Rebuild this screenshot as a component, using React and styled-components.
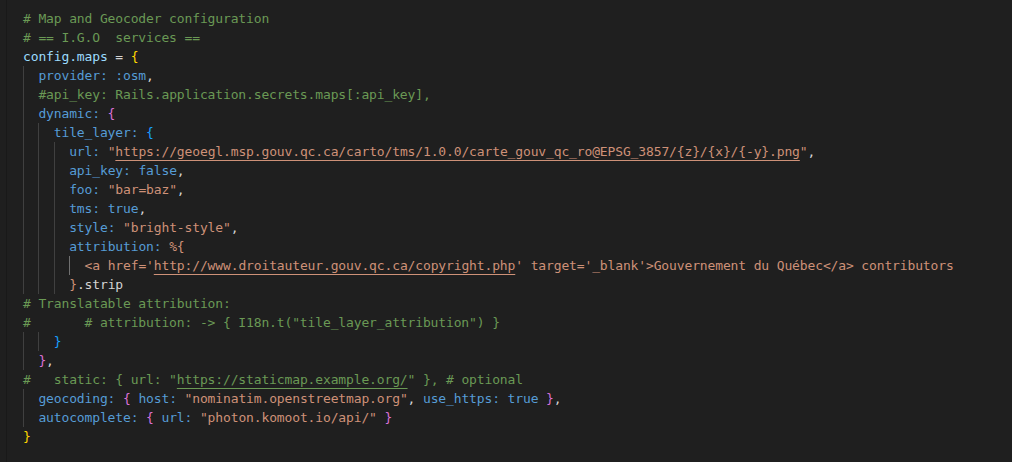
import React from "react";
import styled, { createGlobalStyle } from "styled-components";

const Global = createGlobalStyle`
  html, body { margin: 0; padding: 0; background: #1f1f1f; }
  #root { min-height: 100vh; }
`;

const COLORS = {
  c: "#6a9955",
  v: "#9cdcfe",
  k: "#569cd6",
  p: "#d4d4d4",
  s: "#ce9178",
  b1: "#ffd700",
  b2: "#da70d6",
  b3: "#179fff",
};

const Editor = styled.div`
  display: flex;
  width: 1012px;
  height: 462px;
  background: #1f1f1f;
  overflow: hidden;
`;

const Gutter = styled.div`
  flex: 0 0 6px;
  border-right: 1px solid #191919;
`;

const Code = styled.div`
  display: flex;
  flex-direction: column;
  padding: 9px 0 0 16px;
  font-family: "DejaVu Sans Mono", "Liberation Mono", monospace;
  font-size: 13px;
  letter-spacing: -0.136px;
  line-height: 19px;
  white-space: pre;
`;

const Line = styled.div`
  display: flex;
  height: 19px;
  align-items: flex-start;
`;

const Guide = styled.span`
  display: inline-block;
  height: 19px;
  box-shadow: inset 1px 0 0 ${(p) => (p.$active ? "#707070" : "#404040")};
`;

const Tok = styled.span`
  color: ${(p) => COLORS[p.$t]};
  text-decoration: ${(p) => (p.$u ? "underline" : "none")};
  text-decoration-thickness: 1px;
  text-underline-offset: 4px;
`;

const L = (g, tokens, active = -1) => ({ g, tokens, active });

const lines = [
  L(0, [["c", "# Map and Geocoder configuration"]]),
  L(0, [["c", "# == I.G.O  services =="]]),
  L(0, [["v", "config.maps"], ["p", " = "], ["b1", "{"]]),
  L(1, [["k", "provider: :osm"], ["p", ","]]),
  L(1, [["c", "#api_key: Rails.application.secrets.maps[:api_key],"]]),
  L(1, [["k", "dynamic: "], ["b2", "{"]]),
  L(2, [["k", "tile_layer: "], ["b3", "{"]]),
  L(3, [
    ["k", "url: "],
    ["s", '"'],
    ["s", "https://geoegl.msp.gouv.qc.ca/carto/tms/1.0.0/carte_gouv_qc_ro@EPSG_3857/{z}/{x}/{-y}.png", true],
    ["s", '"'],
    ["p", ","],
  ]),
  L(3, [["k", "api_key: false"], ["p", ","]]),
  L(3, [["k", "foo: "], ["s", '"bar=baz"'], ["p", ","]]),
  L(3, [["k", "tms: true"], ["p", ","]]),
  L(3, [["k", "style: "], ["s", '"bright-style"'], ["p", ","]]),
  L(3, [["k", "attribution: "], ["s", "%{"]]),
  L(
    4,
    [
      ["s", "<a href='"],
      ["s", "http://www.droitauteur.gouv.qc.ca/copyright.php", true],
      ["s", "' target='_blank'>Gouvernement du Québec</a> contributors"],
    ],
    3
  ),
  L(3, [["s", "}"], ["p", ".strip"]]),
  L(0, [["c", "# Translatable attribution:"]]),
  L(0, [["c", '#       # attribution: -> { I18n.t("tile_layer_attribution") }']]),
  L(2, [["b3", "}"]]),
  L(1, [["b2", "}"], ["p", ","]]),
  L(0, [
    ["c", '#   static: { url: "'],
    ["c", "https://staticmap.example.org/", true],
    ["c", '" }, # optional'],
  ]),
  L(1, [
    ["k", "geocoding: "],
    ["b2", "{"],
    ["k", " host: "],
    ["s", '"nominatim.openstreetmap.org"'],
    ["p", ", "],
    ["k", "use_https: true "],
    ["b2", "}"],
    ["p", ","],
  ]),
  L(1, [
    ["k", "autocomplete: "],
    ["b2", "{"],
    ["k", " url: "],
    ["s", '"photon.komoot.io/api/"'],
    ["p", " "],
    ["b2", "}"],
  ]),
  L(0, [["b1", "}"]]),
];

export default function App() {
  return (
    <>
      <Global />
      <Editor>
        <Gutter />
        <Code>
          {lines.map((ln, i) => (
            <Line key={i}>
              {Array.from({ length: ln.g }).map((_, j) => (
                <Guide key={j} $active={j === ln.active}>
                  {"  "}
                </Guide>
              ))}
              {ln.tokens.map(([t, text, u], j) => (
                <Tok key={j} $t={t} $u={u}>
                  {text}
                </Tok>
              ))}
            </Line>
          ))}
        </Code>
      </Editor>
    </>
  );
}
